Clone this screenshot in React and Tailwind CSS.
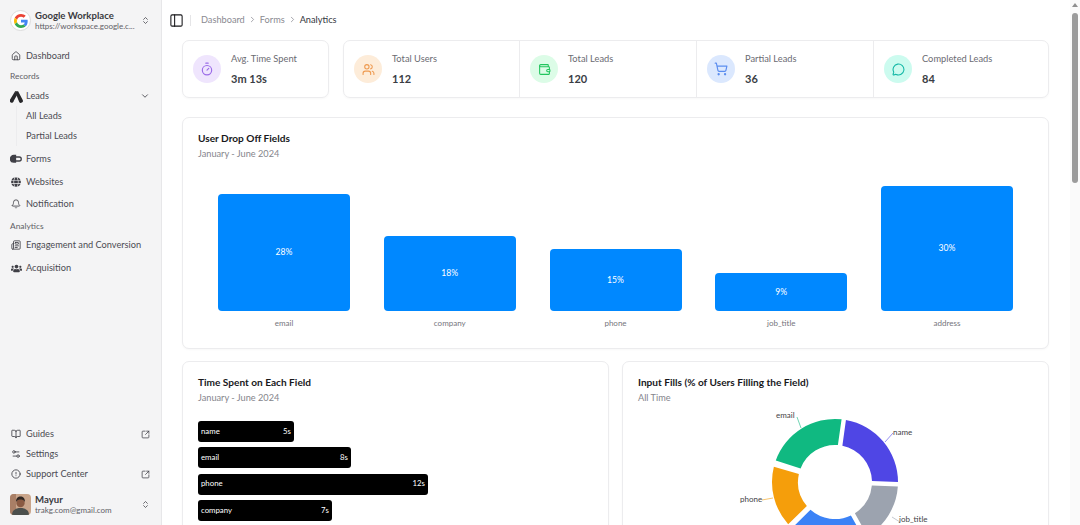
import React from "react";
import { Home, ChevronDown, ChevronsUpDown, Bell, BookOpen, Settings2, CircleAlert, SquareArrowOutUpRight, PanelLeft, ChevronRight, Timer, Users, Wallet, ShoppingCart, MessageCircle, Newspaper } from "lucide-react";
import { FaGlobe, FaUsers } from "react-icons/fa";

const GoogleG = () => (
  <svg viewBox="0 0 48 48" className="w-[14px] h-[14px]">
    <path fill="#EA4335" d="M24 9.5c3.5 0 6.7 1.2 9.2 3.6l6.9-6.9C35.9 2.4 30.5 0 24 0 14.6 0 6.5 5.4 2.6 13.2l8 6.2C12.5 13.7 17.800 9.500 24 9.500z" />
    <path fill="#4285F4" d="M46.900 24.500c0-1.600-.1-3.100-.4-4.500H24v9h12.900c-.6 3-2.200 5.500-4.700 7.200l7.700 6c4.500-4.200 7-10.300 7-17.700z" />
    <path fill="#FBBC05" d="M10.600 28.600c-.5-1.500-.8-3-.8-4.600s.3-3.100.8-4.600l-8-6.200C.9 16.500 0 20.100 0 24s.9 7.500 2.600 10.800l8-6.200z" />
    <path fill="#34A853" d="M24 48c6.500 0 11.900-2.100 15.900-5.800l-7.700-6c-2.200 1.400-4.900 2.300-8.200 2.300-6.200 0-11.500-4.200-13.400-9.900l-8 6.200C6.500 42.600 14.600 48 24 48z" />
  </svg>
);

const LeadsIcon = () => (
  <svg viewBox="0 0 24 24" className="w-[13px] h-[13px] ml-[-1px]" fill="#27272a">
    <path d="M9 2.500 L15 2.500 L23.500 18.500 A3.700 3.700 0 0 1 17 22 Z" />
    <path d="M9.500 2.500 L13 9 L7 20 A3.800 3.800 0 1 1 0.500 17 Z" />
  </svg>
);

const FormsIcon = () => (
  <svg viewBox="0 0 24 24" className="w-[12px] h-[12px] ml-[-1px]" fill="none" stroke="#3f3f46" strokeWidth="2.600">
    <path d="M11 5H7.500a6.500 6.500 0 0 0 0 13H11V5z" fill="#3f3f46" />
    <path d="M11 8h7.500a3.800 3.800 0 0 1 0 8H11" />
  </svg>
);

const Row = ({ icon, label, className = "", right = null }) => (
  <div className={`flex items-center pl-[11px] pr-[10px] text-[9.2px] text-[#4b4b52] ${className}`}>
    <span className="w-[14px] mr-[1px] flex items-center justify-start">{icon}</span>
    <span className="flex-1 whitespace-nowrap">{label}</span>
    {right}
  </div>
);

const Section = ({ label, className = "" }) => (
  <div className={`flex items-center pl-[10px] text-[8.4px] text-[#5f5f66] ${className}`}>{label}</div>
);

const ic = "w-[10px] h-[10px] text-[#3f3f46]";

const Sidebar = () => (
  <aside className="w-[162px] h-full shrink-0 bg-[#f4f4f5] border-r border-[#e7e7e9] flex flex-col justify-between">
    <div className="flex flex-col">
      <div className="h-[41px] flex items-center pl-[10px] pr-[10px]">
        <div className="w-[21px] h-[21px] rounded-full bg-white border border-[#dcdcdc] flex items-center justify-center shrink-0">
          <GoogleG />
        </div>
        <div className="ml-[4px] flex-1 min-w-0">
          <div className="text-[9.600px] leading-[11px] font-bold text-[#3a3a40]">Google Workplace</div>
          <div className="text-[8px] leading-[10px] text-[#5f5f66] whitespace-nowrap">https://workspace.google.c...</div>
        </div>
        <ChevronsUpDown className="w-[9px] h-[9px] text-[#3f3f46] ml-[4px] mr-[1px]" />
      </div>
      <Row className="h-[22px] mt-[4px]" icon={<Home className={ic} />} label="Dashboard" />
      <Section className="h-[18px]" label="Records" />
      <Row className="h-[22px]" icon={<LeadsIcon />} label="Leads" right={<ChevronDown className="w-[10px] h-[10px] text-[#3f3f46] mr-[1px]" />} />
      <div className="ml-[16px] mt-[-1px] border-l border-[#ececee] pl-[9px] text-[9.2px] text-[#4b4b52]">
        <div className="h-[20px] flex items-center">All Leads</div>
        <div className="h-[20px] flex items-center">Partial Leads</div>
      </div>
      <Row className="h-[22px] mt-[2px]" icon={<FormsIcon />} label="Forms" />
      <Row className="h-[22px] mt-[1px]" icon={<FaGlobe className="w-[10px] h-[10px] text-[#3f3f46]" />} label="Websites" />
      <Row className="h-[22px]" icon={<Bell className={ic} />} label="Notification" />
      <Section className="h-[18px] mt-[2px]" label="Analytics" />
      <Row className="h-[22px] mt-[-1px]" icon={<Newspaper className={ic} />} label="Engagement and Conversion" />
      <Row className="h-[22px] mt-[1px]" icon={<FaUsers className="w-[11px] h-[11px] text-[#3f3f46]" />} label="Acquisition" />
    </div>
    <div className="flex flex-col">
      <Row className="h-[20px]" icon={<BookOpen className={ic} />} label="Guides" right={<SquareArrowOutUpRight className="w-[9px] h-[9px] text-[#3f3f46] mr-[1px]" />} />
      <Row className="h-[20px]" icon={<Settings2 className={ic} />} label="Settings" />
      <Row className="h-[20px]" icon={<CircleAlert className={ic} />} label="Support Center" right={<SquareArrowOutUpRight className="w-[9px] h-[9px] text-[#3f3f46] mr-[1px]" />} />
      <div className="h-[41px] flex items-center pl-[10px] pr-[10px]">
        <svg viewBox="0 0 21 21" className="w-[21px] h-[21px] rounded-[4px] shrink-0">
          <rect width="21" height="21" fill="#c9a58b" />
          <rect x="0" y="0" width="6" height="21" fill="#a97f66" />
          <path d="M2 21c0-5 4-7 8.500-7s8.500 2 8.500 7z" fill="#4b4f4c" />
          <circle cx="10.500" cy="9" r="4.200" fill="#8a5a42" />
          <path d="M6 8c0-4 2-5.500 4.500-5.500S15 4 15 8c-1-2-3-2.500-4.500-2.500S7 6 6 8z" fill="#2f2723" />
        </svg>
        <div className="ml-[4px] flex-1 min-w-0">
          <div className="text-[9.600px] leading-[11px] font-bold text-[#3a3a40]">Mayur</div>
          <div className="text-[8px] leading-[10px] text-[#5f5f66] whitespace-nowrap">trakg.com@gmail.com</div>
        </div>
        <ChevronsUpDown className="w-[9px] h-[9px] text-[#3f3f46] ml-[4px] mr-[1px]" />
      </div>
    </div>
  </aside>
);

const Stat = ({ icon, bg, label, value, className = "" }) => (
  <div className={`flex items-center h-full pl-[10px] ${className}`}>
    <div className={`w-[28px] h-[28px] rounded-full flex items-center justify-center shrink-0 ${bg}`}>{icon}</div>
    <div className="ml-[10px] flex flex-col">
      <div className="text-[9.300px] leading-[12px] text-[#6b6b72]">{label}</div>
      <div className="text-[11px] leading-[14px] mt-[7px] font-bold text-[#3a3d44]">{value}</div>
    </div>
  </div>
);

const Card = ({ title, sub, className = "", children }) => (
  <section className={`bg-white border border-[#ececee] rounded-[7px] shadow-[0_1px_2px_rgba(0,0,0,0.03)] ${className}`}>
    <div className="pl-[15px] pt-[14px]">
      <h3 className="text-[10.1px] leading-[13px] font-bold text-[#18181b]">{title}</h3>
      <p className="text-[9.200px] leading-[11px] mt-[3px] text-[#85858c]">{sub}</p>
    </div>
    {children}
  </section>
);

const drops = [
  { l: "email", v: "28%", h: "h-[117px]" },
  { l: "company", v: "18%", h: "h-[75px]" },
  { l: "phone", v: "15%", h: "h-[62px]" },
  { l: "job_title", v: "9%", h: "h-[38px]" },
  { l: "address", v: "30%", h: "h-[125px]" },
];

const times = [
  { l: "name", v: "5s", w: "w-[96px]" },
  { l: "email", v: "8s", w: "w-[153px]" },
  { l: "phone", v: "12s", w: "w-[230px]" },
  { l: "company", v: "7s", w: "w-[134px]" },
];

const polar = (r, a) => {
  const t = ((a - 90) * Math.PI) / 180;
  return [65 + r * Math.cos(t), 72 + r * Math.sin(t)];
};
const arc = (a0, a1, R = 63, r = 37) => {
  const [x0, y0] = polar(R, a0);
  const [x1, y1] = polar(R, a1);
  const [x2, y2] = polar(r, a1 - 1.5);
  const [x3, y3] = polar(r, a0 + 1.5);
  const big = a1 - a0 > 180 ? 1 : 0;
  return `M${x0} ${y0}A${R} ${R} 0 ${big} 1 ${x1} ${y1}L${x2} ${y2}A${r} ${r} 0 ${big} 0 ${x3} ${y3}Z`;
};

const Donut = () => (
  <svg viewBox="-35 0 200 130" className="w-[200px] h-[130px] block" fontFamily="Lato, sans-serif">
    <path d={arc(10, 90)} fill="#4f46e5" />
    <path d={arc(94, 149)} fill="#9ca3af" />
    <path d={arc(153, 223)} fill="#3b82f6" />
    <path d={arc(228, 284)} fill="#f59e0b" />
    <path d={arc(290, 366)} fill="#10b981" />
    <path d="M27 7 L31 18" stroke="#10b981" strokeWidth="0.600" fill="none" />
    <path d="M123 23 L115 32" stroke="#4f46e5" strokeWidth="0.600" fill="none" />
    <path d="M-8 90 L3 88" stroke="#f59e0b" strokeWidth="0.600" fill="none" />
    <path d="M122 107 L130 112" stroke="#9ca3af" strokeWidth="0.600" fill="none" />
    <text x="6" y="8" fontSize="8" fill="#3f3f46">email</text>
    <text x="123" y="25" fontSize="8" fill="#3f3f46">name</text>
    <text x="-30" y="92" fontSize="8" fill="#3f3f46">phone</text>
    <text x="129" y="112" fontSize="8" fill="#3f3f46">job_title</text>
  </svg>
);

export default function App() {
  return (
    <div className="w-[1080px] h-[525px] overflow-hidden flex bg-white font-['Lato',sans-serif]">
      <Sidebar />
      <main className="flex-1 min-w-0 h-full overflow-hidden flex flex-col">
        <header className="h-[40px] shrink-0 flex items-center pl-[7px]">
          <PanelLeft className="w-[15px] h-[15px] text-[#18181b]" strokeWidth={1.7} />
          <div className="w-px h-[11px] bg-[#e5e5e7] ml-[6px] mr-[10px]" />
          <nav className="flex items-center text-[9.2px] text-[#8a8a91]">
            <span>Dashboard</span>
            <ChevronRight className="w-[9px] h-[9px] mx-[3px]" />
            <span>Forms</span>
            <ChevronRight className="w-[9px] h-[9px] mx-[3px]" />
            <span className="text-[#33363d]">Analytics</span>
          </nav>
        </header>
        <div className="pl-[20px] pr-[21px] flex flex-col">
          <div className="flex gap-[14px] h-[58px]">
            <div className="w-[147px] border border-[#ececee] rounded-[7px] shadow-[0_1px_2px_rgba(0,0,0,0.03)]">
              <Stat bg="bg-[#efe5fd]" icon={<Timer className="w-[14px] h-[14px] text-[#9b6be8]" />} label="Avg. Time Spent" value="3m 13s" />
            </div>
            <div className="flex-1 grid grid-cols-[176px_177px_177px_1fr] border border-[#ececee] rounded-[7px] shadow-[0_1px_2px_rgba(0,0,0,0.03)] divide-x divide-[#ececee]">
              <Stat bg="bg-[#fdecd9]" icon={<Users className="w-[13px] h-[13px] text-[#ee9a50]" />} label="Total Users" value="112" />
              <Stat bg="bg-[#dcfce7]" icon={<Wallet className="w-[13px] h-[13px] text-[#22c55e]" />} label="Total Leads" value="120" />
              <Stat bg="bg-[#dbe8fe]" icon={<ShoppingCart className="w-[14px] h-[14px] text-[#5b8def]" />} label="Partial Leads" value="36" />
              <Stat bg="bg-[#ccfbef]" icon={<MessageCircle className="w-[13px] h-[13px] text-[#14b8a6]" />} label="Completed Leads" value="84" />
            </div>
          </div>

          <Card className="mt-[19px] h-[232px]" title="User Drop Off Fields" sub="January - June 2024">
            <div className="mx-[35px] mt-[27px] h-[125px] flex items-end justify-between">
              {drops.map((d) => (
                <div key={d.l} className={`w-[132px] ${d.h} rounded-[4px] bg-[#0088ff] flex items-center justify-center text-[8.600px] text-white`}>{d.v}</div>
              ))}
            </div>
            <div className="mx-[35px] mt-[7px] flex justify-between">
              {drops.map((d) => (
                <div key={d.l} className="w-[132px] text-center text-[8px] leading-[11px] text-[#75757c]">{d.l}</div>
              ))}
            </div>
          </Card>

          <div className="mt-[12px] grid grid-cols-2 gap-[13px]">
            <Card className="h-[200px]" title="Time Spent on Each Field" sub="January - June 2024">
              <div className="ml-[15px] mt-[18px] flex flex-col gap-[5.300px]">
                {times.map((t) => (
                  <div key={t.l} className={`${t.w} h-[21px] rounded-[3px] bg-black text-white text-[7.800px] flex items-center justify-between px-[3px]`}>
                    <span>{t.l}</span>
                    <span>{t.v}</span>
                  </div>
                ))}
              </div>
            </Card>
            <Card className="h-[200px]" title="Input Fills (% of Users Filling the Field)" sub="All Time">
              <div className="flex justify-center mt-[7px] ml-[-1px]">
                <Donut />
              </div>
            </Card>
          </div>
        </div>
      </main>
      <div className="w-[10px] h-full shrink-0 bg-[#fafafa] flex flex-col items-center pt-[3px]">
        <div className="w-0 h-0 border-l-[3px] border-r-[3px] border-b-[4px] border-l-transparent border-r-transparent border-b-[#8f8f8f]" />
        <div className="w-[6px] h-[170px] mt-[6px] rounded-full bg-[#9b9b9b]" />
      </div>
    </div>
  );
}
